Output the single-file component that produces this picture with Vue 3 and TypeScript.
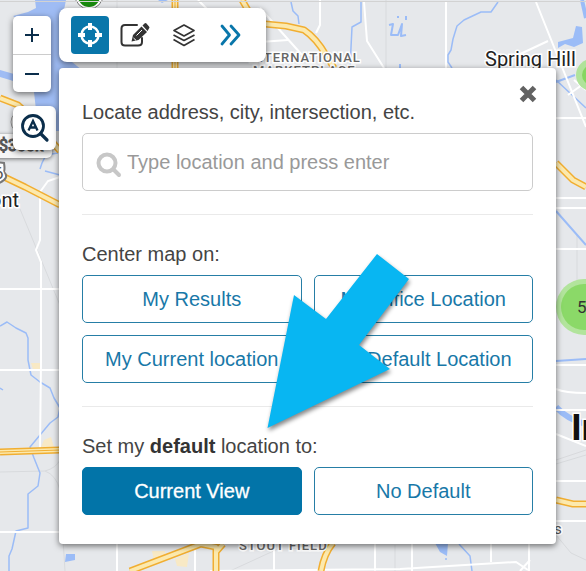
<script setup lang="ts">
import { ref } from 'vue'

interface LocationOption {
  id: string
  label: string
}

const query = ref('')
const centerOptions: LocationOption[] = [
  { id: 'results', label: 'My Results' },
  { id: 'office', label: 'My Office Location' },
  { id: 'current', label: 'My Current location' },
  { id: 'default', label: 'My Default Location' },
]
const defaultOptions: LocationOption[] = [
  { id: 'view', label: 'Current View' },
  { id: 'none', label: 'No Default' },
]
const selectedDefault = ref('view')
</script>

<template>
  <main class="stage">
    <svg class="map" viewBox="0 0 586 571" preserveAspectRatio="xMinYMin slice" aria-hidden="true">
      <rect width="586" height="571" fill="#e6e8eb" />
      <g fill="none" stroke="#d8dadd" stroke-width="1">
        <path d="M117 0V70M386 0V70M20 209L62 310M0 472L45 471Q56 468 60 460M45 471Q56 475 60 490M60 490L65 571M577 235V330M556 460L586 450M556 464L586 455M395 571V545M556 535L571 553L586 560M230 571L280 548" />
      </g>
      <!-- water -->
      <path d="M35 0H66L62 20L72 62L82 70H60V131H56V142H50L36 110L34 92L22 84L10 80L0 77V70L14 74L34 78L48 60L22 22L13 16L28 12L36 8Z" fill="#9fbcf4" />
      <g fill="#9bbcf7">
        <path d="M558 42L573 38L576 26L582 27L583 43L574 47L565 44L558 48Z" />
        <path d="M66 554H75V560L65 562Z" />
        <path d="M435 543H448L447 556L440 552Z" />
        <circle cx="446" cy="559" r="1" />
        <path d="M158 0H168L162 3Z" />
      </g>
      <g fill="none" stroke="#9bbcf7" stroke-width="1.5" stroke-linejoin="round">
        <path d="M291 2L293 11L298 16L299 24M361 2V22L352 27L350 68M498 2L491 12H481L464 20L457 26L453 39L451 50L448 55V62L452 68" />
        <path d="M389 25L393 24L391 35H398L402 24L401 36L406 35M398 16V18M406 16V20M400 64V68" stroke-width="2" />
        <path d="M0 326L7 322L16 328L26 333L28 338V360L31 375L40 382L50 388L54 398L60 408L58 417L50 423L30 447L34 458L40 473L38 486L28 494V528L16 531L12 549L9 556V571" />
        <path d="M40 169L42 163L46 155L58 153M45 171L60 175M0 388L3 390M459 544L470 556L472 571M586 108L556 80" />
        <path d="M556 82L575 75M556 211L586 245" stroke-width="2" />
        <path d="M582 0L586 18" stroke-width="4" />
        <path d="M556 407Q568 420 586 424" stroke-width="6" />
        <path d="M556 361L586 359" stroke-width="2" />
      </g>
      <!-- local streets -->
      <g fill="none" stroke="#fff" stroke-width="2">
        <path d="M0 289H60M0 370H60M0 532H60M60 177L48 181L40 192V240L36 250L41 262V360L40 450" />
        <path d="M198 0L228 30M260 8L302 55M320 0V25L316 33M364 2L367 41L384 68M446 2V68M536 2L586 127M548 41L516 56M568 95L586 82M260 42L288 40" />
        <path d="M556 118H586M556 198H586M556 208H586M556 249H586M556 389Q565 393 586 393M556 410H586M556 434L586 446M556 481H586M556 521H586" />
        <path d="M117 544V571M195 544V571M274 544V571M375 544V571M412 544V571M491 544V562M529 521V571M210 571L400 569L516 562L528 570M556 365H586M574 80L586 90M520 571L530 560" />
      </g>
      <!-- business areas -->
      <path d="M31 363H40V369H33ZM44 440L51 437L54 447H41ZM152 551H165V561H154ZM175 559L189 553L187 567L177 566Z" fill="#f8e9c5" />
      <!-- highways -->
      <g fill="none" stroke="#f1ae31" stroke-width="7" stroke-linejoin="round">
        <path d="M0 98L18 105L32 118L60 151M0 175L25 187L60 205M0 452L60 450" />
        <path d="M265 24L286 26L304 30Q316 38 326 55L334 68M175 0V68M242 0L249 12" />
        <path d="M556 163L573 180L586 187M556 500L573 504H586" />
        <path d="M130 571L201 544L216 547V571M333 543Q324 554 321 571M216 552L223 544" />
      </g>
      <g fill="none" stroke="#fce9ad" stroke-width="4" stroke-linejoin="round">
        <path d="M0 98L18 105L32 118L60 151M0 175L25 187L60 205M0 452L60 450" />
        <path d="M265 24L286 26L304 30Q316 38 326 55L334 68M175 0V68M242 0L249 12" />
        <path d="M556 163L573 180L586 187M556 500L573 504H586" />
        <path d="M130 571L201 544L216 547V571M333 543Q324 554 321 571M216 552L223 544" />
      </g>
      <path d="M175 0V68M0 452L60 450" stroke="#f1ae31" fill="none" />
      <!-- listing clusters -->
      <g>
        <circle cx="592" cy="75" r="16" fill="#b0e39a" />
        <circle cx="592" cy="75" r="10" fill="#86d661" />
        <circle cx="584" cy="307" r="28" fill="#b2e49c" />
        <circle cx="584" cy="307" r="23" fill="#8bd968" />
        <circle cx="89" cy="-5" r="14" fill="#fff" stroke="#777" />
        <circle cx="89" cy="-4" r="11" fill="#188a0e" />
      </g>
      <!-- price tag and route shield -->
      <circle cx="22" cy="122" r="11" fill="#eee" stroke="#999" />
      <rect class="tag" x="-10" y="134" width="62" height="24" rx="5" fill="#f6f6f6" />
      <text x="-1" y="151" font-size="16" fill="#555" stroke="#555">$300k</text>
      <path d="M-6 162L4 163Q5 169 4 172Q10 178 -1 183" fill="#fff" stroke="#777" stroke-width="2" />
      <text class="halo" x="-6" y="179" font-size="17" fill="#555">6</text>
      <g class="halo">
        <text x="-10" y="207" font-size="20" fill="#222">ont</text>
        <text x="485" y="66" font-size="20" fill="#222">Spring Hill</text>
        <text class="area" x="253" y="75" font-size="13">MARKETPLACE</text>
        <text class="area" x="249" y="62" font-size="13">INTERNATIONAL</text>
        <text class="area" x="239" y="550" font-size="13">STOUT FIELD</text>
        <text x="554" y="534" font-size="15" fill="#555">s</text>
        <text x="571" y="440" font-size="37" font-weight="700" fill="#111">Indianapolis</text>
      </g>
      <text x="577" y="313" font-size="17" fill="#333">57</text>
      <path d="M0 1.5H586" stroke="#d2d2d2" />
    </svg>

    <div class="overlay">
      <div class="side">
        <div class="zoom" role="group" aria-label="Zoom">
          <button type="button" aria-label="Zoom in">
            <svg width="16" height="16" viewBox="0 0 16 16"><path d="M8 1V15M1 8H15" /></svg>
          </button>
          <button type="button" aria-label="Zoom out">
            <svg width="16" height="16" viewBox="0 0 16 16"><path d="M1 8H15" /></svg>
          </button>
        </div>
        <button type="button" class="area-search" aria-label="Search area">
          <svg width="30" height="30" viewBox="0 0 30 30" fill="none" stroke="#0b2e4b">
            <circle cx="13" cy="13" r="10.5" stroke-width="2.8" />
            <path d="M20.5 20.5L27 27" stroke-width="3.2" stroke-linecap="round" />
            <path d="M8.500 17.500L13 8L17.500 17.500M10 14.500H16" stroke-width="2.300" />
          </svg>
        </button>
      </div>

      <div class="content">
        <nav class="toolbar" aria-label="Map tools">
          <button type="button" class="tool active" aria-label="Locate">
            <svg width="26" height="26" viewBox="0 0 26 26" fill="none" stroke="#fff">
              <circle cx="13" cy="13" r="8.5" stroke-width="2.5" />
              <path d="M13 1V8M13 18V25M1 13H8M18 13H25" stroke-width="4" />
            </svg>
          </button>
          <button type="button" class="tool draw" aria-label="Draw">
            <svg width="30" height="26" viewBox="0 0 30 26" fill="none" stroke="#333">
              <path d="M17 3H5Q1.500 3 1.500 6.500V20Q1.500 23.500 5 23.500H18Q22 23.500 22 20V16" stroke-width="2" stroke-linecap="round" />
              <path d="M11.500 19.500L13 13L21.500 4.500L27 10L18.500 18Z" fill="#333" stroke="none" />
              <path d="M22.500 3.500L24.500 1.500Q25.500 .5 26.500 1.500L29 4.500Q30 5.500 29 6.500L27.500 9Z" fill="#333" stroke="none" />
              <path d="M16.500 13.500L22 8M13.500 16L16 18.300" stroke="#fff" />
            </svg>
          </button>
          <button type="button" class="tool" aria-label="Layers">
            <svg width="24" height="24" viewBox="0 0 24 24" fill="none" stroke="#333" stroke-width="1.7" stroke-linejoin="round">
              <path d="M12 2L22 7.500L12 13L2 7.500Z" />
              <path d="M1.500 12L12 17.500L22.500 12M1.500 16.500L12 22.500L22.500 16.500" />
            </svg>
          </button>
          <button type="button" class="tool" aria-label="More tools">
            <svg width="24" height="24" viewBox="0 0 24 24" fill="none" stroke="#0976aa" stroke-width="2.8" stroke-linecap="round" stroke-linejoin="round">
              <path d="M3 3L10.500 12L3 21M12 3L20 12L12 21" />
            </svg>
          </button>
        </nav>

        <section class="panel" aria-label="Locate">
          <button type="button" class="close" aria-label="Close">
            <svg width="20" height="20" viewBox="0 0 20 20"><path d="M3.500 3.500L16.500 16.500M16.500 3.500L3.500 16.500" stroke="#626262" stroke-width="5" /></svg>
          </button>
          <label class="caption" for="location">Locate address, city, intersection, etc.</label>
          <div class="field">
            <svg width="26" height="26" viewBox="0 0 26 26" fill="none" stroke="#c7c7c7">
              <circle cx="11" cy="11" r="8.5" stroke-width="4" />
              <path d="M17.500 17.500L23 23" stroke-width="4" stroke-linecap="round" />
            </svg>
            <input id="location" v-model="query" type="text" placeholder="Type location and press enter" />
          </div>
          <hr />
          <p id="center-caption" class="caption">Center map on:</p>
          <div class="choices" role="group" aria-labelledby="center-caption">
            <button v-for="option in centerOptions" :key="option.id" type="button" class="choice">{{ option.label }}</button>
          </div>
          <hr />
          <p id="default-caption" class="caption">Set my <strong>default</strong> location to:</p>
          <div class="choices" role="group" aria-labelledby="default-caption">
            <button
              v-for="option in defaultOptions"
              :key="option.id"
              type="button"
              class="choice"
              :class="{ selected: option.id === selectedDefault }"
              :aria-pressed="option.id === selectedDefault"
              @click="selectedDefault = option.id"
            >{{ option.label }}</button>
          </div>
          <svg class="pointer" width="143" height="175" viewBox="0 0 143 175" aria-hidden="true">
            <path d="M0.500 174L27 41L59 65L110 0L142 25L92 91L123 115Z" fill="#08b6f2" />
          </svg>
        </section>
      </div>
    </div>
  </main>
</template>

<style>
body {
  margin: 0;
}
</style>

<style scoped>
.stage {
  position: relative;
  min-height: 100vh;
  overflow: hidden;
  box-sizing: border-box;
  font-family: "Liberation Sans", Arial, sans-serif;
  font-size: 20px;
  line-height: 24px;
  color: #444;
}
.map {
  position: absolute;
  inset: 0;
  width: 100%;
  height: 100%;
  font-family: Roboto, sans-serif;
}
.tag {
  filter: drop-shadow(0 1px 2px #0008);
}
.halo {
  stroke: #fff;
  stroke-width: 3px;
  paint-order: stroke;
}
.area {
  fill: #666;
  font-weight: 500;
  letter-spacing: 1px;
}
.overlay {
  position: relative;
  display: flex;
  gap: 3px;
  padding: 8px 30px 27px 13px;
}
.side {
  display: flex;
  flex-direction: column;
  align-items: flex-start;
  gap: 14px;
  padding-top: 8px;
}
button {
  display: flex;
  align-items: center;
  justify-content: center;
  margin: 0;
  padding: 0;
  border: 0;
  background: none;
  font: inherit;
  cursor: pointer;
}
.zoom,
.area-search,
.toolbar,
.panel {
  background: #fff;
  box-shadow: 0 2px 6px #0008;
}
.zoom {
  width: 38px;
  border-radius: 5px;
}
.zoom button {
  width: 100%;
  height: 38px;
}
.zoom button + button {
  border-top: 1px solid #ccc;
}
.zoom svg {
  fill: none;
  stroke: #0b2e4b;
  stroke-width: 2px;
}
.area-search {
  width: 43px;
  height: 44px;
  border-radius: 6px;
}
.content {
  flex: 1;
  display: flex;
  flex-direction: column;
  align-items: flex-start;
  gap: 6px;
  min-width: 0;
}
.toolbar {
  display: flex;
  gap: 9px;
  padding: 8px 16px 8px 12px;
  border-radius: 8px;
}
.tool {
  width: 38px;
  height: 38px;
  border-radius: 4px;
}
.tool.active {
  background: #0976aa;
}
.tool.draw {
  justify-content: flex-start;
  padding-left: 2px;
}
.panel {
  position: relative;
  width: 100%;
  box-sizing: border-box;
  padding: 32px 23px 29px;
  border-radius: 4px;
}
.close {
  position: absolute;
  top: 16px;
  right: 18px;
}
.caption {
  display: block;
  margin: 0 0 9px;
}
.caption strong {
  color: #333;
}
.field {
  display: flex;
  align-items: center;
  gap: 5px;
  height: 58px;
  box-sizing: border-box;
  padding: 0 13px;
  border: 1px solid #ccc;
  border-radius: 5px;
}
.field svg {
  flex: none;
  margin-top: 6px;
}
.field input {
  flex: 1;
  min-width: 0;
  padding: 0;
  border: 0;
  outline: 0;
  background: none;
  font: inherit;
  color: #444;
}
.field input::placeholder {
  color: #999;
  opacity: 1;
}
hr {
  margin: 23px 0 27px;
  border: 0;
  border-top: 1px solid #eaeaea;
}
.choices {
  display: grid;
  grid-template-columns: 1fr 1fr;
  gap: 12px;
}
.choice {
  height: 48px;
  border: 1px solid #267ea6;
  border-radius: 5px;
  color: #1878a8;
  white-space: nowrap;
}
.choice.selected {
  background: #0274a8;
  border-color: #0274a8;
  color: #fff;
  -webkit-text-stroke: 0.3px #fff;
}
.pointer {
  position: absolute;
  top: 186px;
  left: 208px;
  overflow: visible;
  pointer-events: none;
  filter: drop-shadow(1px 3px 2px #0007);
}
</style>
